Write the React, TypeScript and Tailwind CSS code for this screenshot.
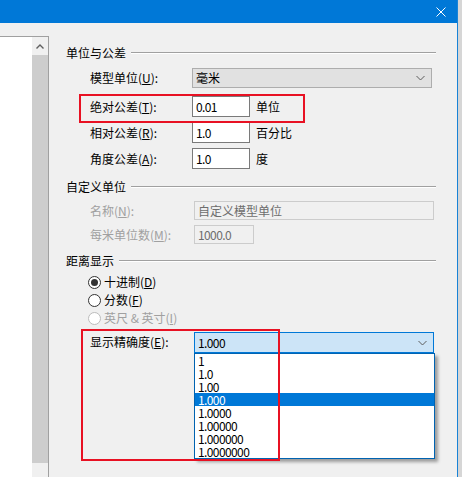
import type { ReactNode } from 'react';

const FONT = "font-['Noto_Sans_CJK_SC','Noto_Sans',sans-serif]";

function GroupTitle({ title, className }: { title: string; className: string }) {
  return (
    <div className={`flex h-[16px] items-center pl-[17px] pr-[21px] ${className}`}>
      <span className="leading-[16px] text-black">{title}</span>
      <div className="ml-[5px] h-0 flex-1 border-t border-b border-t-[#a0a0a0] border-b-white" />
    </div>
  );
}

function Label({ text, k, disabled }: { text: string; k: string; disabled?: boolean }) {
  return (
    <span className={`w-[102px] shrink-0 leading-[16px] ${disabled ? 'text-[#a0a0a0]' : 'text-black'}`}>
      {text}(<u>{k}</u>):
    </span>
  );
}

function Chevron() {
  return (
    <svg width="9" height="6" viewBox="0 0 9 6" className="mr-[6px]">
      <path d="M0.5 1 L4.5 5 L8.5 1" fill="none" stroke="#5c5c5c" strokeWidth="1" />
    </svg>
  );
}

function Field({ value, unit }: { value: string; unit: string }) {
  return (
    <>
      <div className="flex h-[21px] w-[58px] items-center border border-[#7a7a7a] bg-white pl-[3px] leading-[16px] tracking-[-0.6px]">
        {value}
      </div>
      <span className="ml-[6px] leading-[16px]">{unit}</span>
    </>
  );
}

function Row({ children, className }: { children: ReactNode; className: string }) {
  return <div className={`flex items-center pl-[41px] ${className}`}>{children}</div>;
}

function Radio({ label, k, checked, disabled }: { label: string; k: string; checked?: boolean; disabled?: boolean }) {
  return (
    <div className="flex h-[16px] items-center pl-[39px] mt-[2px] first:mt-[5px]">
      <span
        className={`flex h-[13px] w-[13px] items-center justify-center rounded-full border bg-white ${
          disabled ? 'border-[#bcbcbc]' : 'border-[#333333]'
        }`}
      >
        {checked && <span className="h-[7px] w-[7px] rounded-full bg-[#333333]" />}
      </span>
      <span className={`ml-[3px] leading-[16px] ${disabled ? 'text-[#a0a0a0]' : 'text-black'}`}>
        {label}(<u>{k}</u>)
      </span>
    </div>
  );
}

const precisions = ['1', '1.0', '1.00', '1.000', '1.0000', '1.00000', '1.000000', '1.0000000'];

export default function App() {
  return (
    <div className={`relative flex h-[477px] w-[462px] overflow-hidden bg-[#d6d6d6] text-[12px] ${FONT}`}>
      <div className="flex h-full w-[458px] flex-col border-r border-[#1883d7] bg-[#f0f0f0]">
        <div className="flex h-[23px] items-center justify-end bg-[#0078d7] pr-[11px]">
          <svg width="10" height="10" viewBox="0 0 10 10">
            <path d="M0.5 0.5 L9.5 9.5 M9.5 0.5 L0.5 9.5" stroke="white" strokeWidth="1" />
          </svg>
        </div>

        <div className="flex flex-1">
          {/* left tree panel */}
          <div className="mt-[13px] flex w-[49px] border-t border-r border-[#a0a0a0] bg-white">
            <div className="w-[32px]" />
            <div className="flex w-[16px] flex-col bg-[#f0f0f0]">
              <div className="flex h-[18px] items-center justify-center">
                <svg width="8" height="5" viewBox="0 0 8 5">
                  <path d="M0.5 4.5 L4 1 L7.5 4.5" fill="none" stroke="#606060" strokeWidth="1.4" />
                </svg>
              </div>
              <div className="h-[408px] bg-[#cdcdcd]" />
            </div>
          </div>

          {/* settings */}
          <div className="flex flex-1 flex-col">
            <GroupTitle title="单位与公差" className="mt-[22px]" />

            <Row className="mt-[7px] h-[20px]">
              <Label text="模型单位" k="U" />
              <div className="flex h-[20px] w-[240px] items-center justify-between border border-[#adadad] bg-[#e1e1e1] pl-[3px]">
                <span className="leading-[16px]">毫米</span>
                <Chevron />
              </div>
            </Row>

            <Row className="mt-[8px] h-[21px]">
              <Label text="绝对公差" k="T" />
              <Field value="0.01" unit="单位" />
            </Row>
            <Row className="mt-[5px] h-[21px]">
              <Label text="相对公差" k="R" />
              <Field value="1.0" unit="百分比" />
            </Row>
            <Row className="mt-[5px] h-[21px]">
              <Label text="角度公差" k="A" />
              <Field value="1.0" unit="度" />
            </Row>

            <GroupTitle title="自定义单位" className="mt-[10px]" />

            <Row className="mt-[6px] h-[19px] pl-[39px]">
              <span className="w-[104px] leading-[16px] text-[#a0a0a0]">
                名称(<u>N</u>):
              </span>
              <div className="flex h-[19px] w-[240px] items-center border border-[#cccccc] bg-[#f0f0f0] pl-[3px] leading-[16px] text-[#6d6d6d]">
                自定义模型单位
              </div>
            </Row>
            <Row className="mt-[5px] h-[19px] pl-[39px]">
              <span className="w-[104px] leading-[16px] text-[#a0a0a0]">
                每米单位数(<u>M</u>):
              </span>
              <div className="flex h-[19px] w-[60px] items-center border border-[#cccccc] bg-[#f0f0f0] pl-[3px] leading-[16px] tracking-[-0.6px] text-[#6d6d6d]">
                1000.0
              </div>
            </Row>

            <GroupTitle title="距离显示" className="mt-[9px]" />

            <div className="flex flex-col">
              <Radio label="十进制" k="D" checked />
              <Radio label="分数" k="F" />
              <Radio label="英尺 & 英寸" k="I" disabled />
            </div>

            <Row className="mt-[6px] h-[21px] items-start pl-[39px]">
              <span className="w-[104px] pt-[2px] leading-[16px]">
                显示精确度(<u>E</u>):
              </span>
              <div className="relative">
                <div className="flex h-[21px] w-[240px] items-center justify-between border border-[#0078d7] bg-[#cce4f7] pl-[3px]">
                  <span className="leading-[16px] tracking-[-0.6px]">1.000</span>
                  <Chevron />
                </div>
                <ul className="absolute left-0 top-[21px] w-[241px] border border-[#0063b1] bg-white shadow-[3px_3px_3px_rgba(0,0,0,0.35)]">
                  {precisions.map((p) => (
                    <li
                      key={p}
                      className={`h-[13px] pl-[3px] leading-[13px] tracking-[-0.6px] ${
                        p === '1.000' ? 'bg-[#0078d7] text-white' : 'text-black'
                      }`}
                    >
                      {p}
                    </li>
                  ))}
                </ul>
              </div>
            </Row>
          </div>
        </div>
      </div>
      <div className="flex-1 bg-[#d6d6d6]" />

      {/* red annotation frames */}
      <div className="pointer-events-none absolute left-[79px] top-[94px] h-[29px] w-[226px] border-2 border-[#e81123]" />
      <div className="pointer-events-none absolute left-[81px] top-[329px] h-[132px] w-[199px] border-2 border-[#e81123]" />
    </div>
  );
}
